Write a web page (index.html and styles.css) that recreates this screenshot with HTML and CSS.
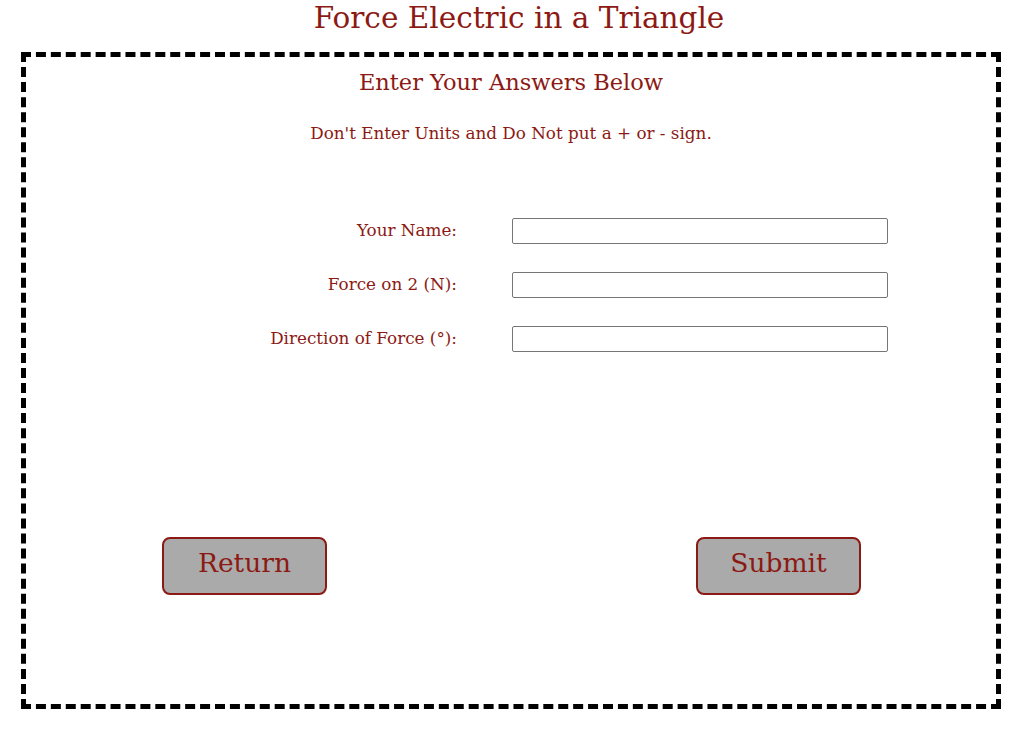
FILE: index.html
```html
<!DOCTYPE html>
<html lang="en">
<head>
<meta charset="utf-8">
<title>Force Electric in a Triangle</title>
<link rel="stylesheet" href="styles.css">
</head>
<body>
  <h1 class="page-title">Force Electric in a Triangle</h1>
  <form class="answer-box" onsubmit="return false;">
    <h2 class="box-heading">Enter Your Answers Below</h2>
    <p class="box-note">Don't Enter Units and Do Not put a + or - sign.</p>
    <div class="field-grid">
      <label class="field-label" for="name">Your Name:</label>
      <input class="field-input" id="name" type="text">
      <label class="field-label" for="force">Force on 2 (N):</label>
      <input class="field-input" id="force" type="text">
      <label class="field-label" for="direction">Direction of Force (°):</label>
      <input class="field-input" id="direction" type="text">
    </div>
    <div class="button-row">
      <button class="action-btn" type="button">Return</button>
      <button class="action-btn" type="submit">Submit</button>
    </div>
  </form>
</body>
</html>
```

FILE: styles.css
```css
html, body {
  margin: 0;
  padding: 0;
  background: #ffffff;
}

body {
  font-family: "DejaVu Serif", "Liberation Serif", serif;
  color: #8c1a14;
}

.page-title {
  margin: 0;
  font-size: 29.5px;
  font-weight: normal;
  line-height: 36px;
  text-align: center;
  padding-left: 14px;
}

.answer-box {
  box-sizing: border-box;
  width: 980px;
  height: 657px;
  margin: 16px 0 0 21px;
  border: 5px dashed #000000;
  display: flex;
  flex-direction: column;
}

.box-heading {
  margin: 10px 0 0;
  font-size: 22.5px;
  font-weight: normal;
  line-height: 30px;
  text-align: center;
}

.box-note {
  margin: 26px 0 0;
  font-size: 16.8px;
  line-height: 20px;
  text-align: center;
}

.field-grid {
  display: grid;
  grid-template-columns: 1fr 376px;
  column-gap: 55px;
  row-gap: 28px;
  align-items: center;
  padding-right: 108px;
  margin-top: 75px;
}

.field-label {
  text-align: right;
  font-size: 16.8px;
  line-height: 20px;
  padding-bottom: 2px;
}

.field-input {
  box-sizing: border-box;
  width: 376px;
  height: 26px;
  margin: 0;
  border: 1px solid #767676;
  border-radius: 2px;
  background: #ffffff;
  font: inherit;
  font-size: 14px;
}

.button-row {
  display: flex;
  justify-content: space-between;
  padding: 0 135px 0 136px;
  margin-top: 185px;
}

.action-btn {
  box-sizing: border-box;
  width: 165px;
  height: 58px;
  background: #aaaaaa;
  border: 2px solid #8c1a14;
  border-radius: 8px;
  color: #8c1a14;
  font-family: "DejaVu Serif", "Liberation Serif", serif;
  font-size: 26.5px;
  padding: 0 0 8px;
  cursor: pointer;
}
```
